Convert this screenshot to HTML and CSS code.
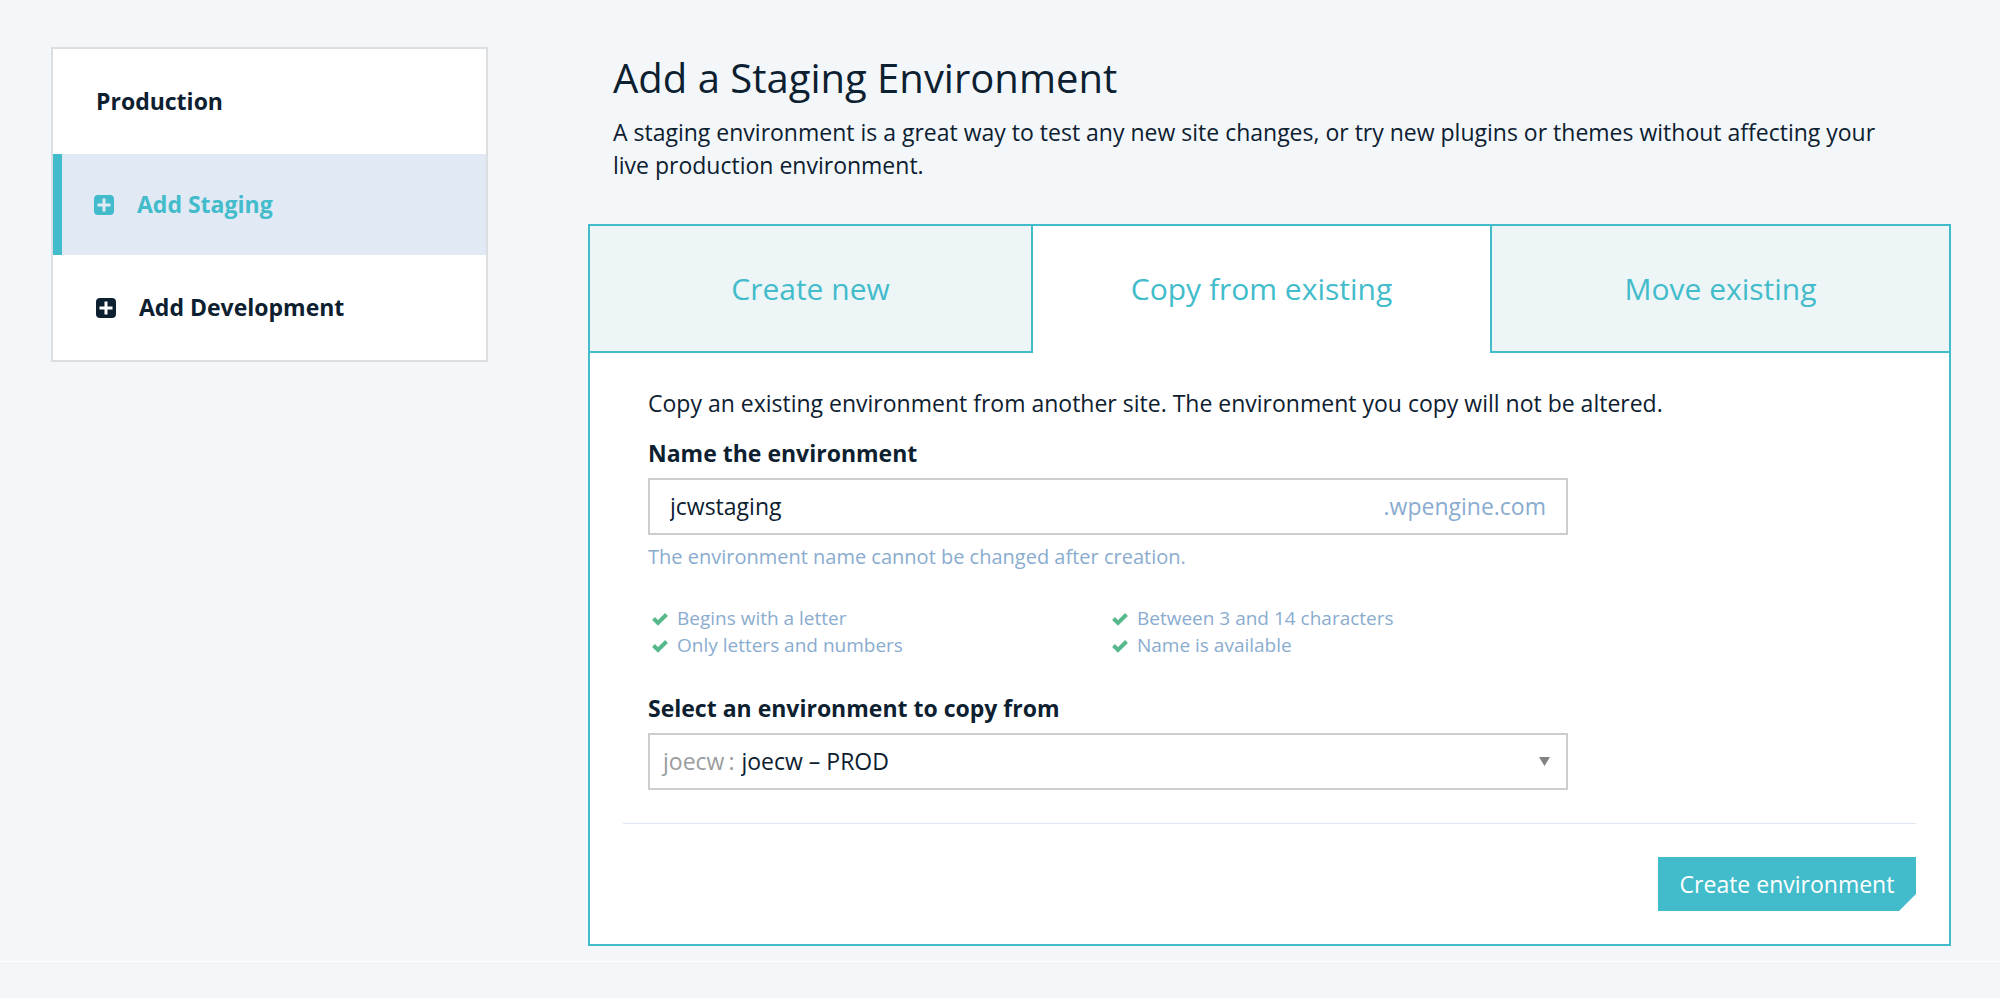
FILE: index.html
```html
<!DOCTYPE html>
<html lang="en">
<head>
<meta charset="utf-8">
<title>Add a Staging Environment</title>
<link rel="stylesheet" href="styles.css">
</head>
<body>
<div class="page">
  <nav class="sidebar" aria-label="Environments">
    <a class="env" href="#">Production</a>
    <a class="env env-active" href="#" aria-current="page">
      <svg class="plus" viewBox="0 0 20 20" aria-hidden="true"><path fill="currentColor" fill-rule="evenodd" d="M4 0h12a4 4 0 0 1 4 4v12a4 4 0 0 1-4 4H4a4 4 0 0 1-4-4V4a4 4 0 0 1 4-4zM8.500 3.500v5h-5v3h5v5h3v-5h5v-3h-5v-5z"/></svg>
      Add Staging
    </a>
    <a class="env" href="#">
      <svg class="plus" viewBox="0 0 20 20" aria-hidden="true"><path fill="currentColor" fill-rule="evenodd" d="M4 0h12a4 4 0 0 1 4 4v12a4 4 0 0 1-4 4H4a4 4 0 0 1-4-4V4a4 4 0 0 1 4-4zM8.500 3.500v5h-5v3h5v5h3v-5h5v-3h-5v-5z"/></svg>
      Add Development
    </a>
  </nav>
  <main class="main">
    <header class="intro">
      <h1 class="title">Add a Staging Environment</h1>
      <p class="lead">A staging environment is a great way to test any new site changes, or try new plugins or themes without affecting your live production environment.</p>
    </header>
    <section class="panel">
      <div class="tabs" role="tablist">
        <button class="tab" type="button" role="tab" aria-selected="false">Create new</button>
        <button class="tab tab-active" type="button" role="tab" aria-selected="true">Copy from existing</button>
        <button class="tab" type="button" role="tab" aria-selected="false">Move existing</button>
      </div>
      <form class="form">
        <p class="note">Copy an existing environment from another site. The environment you copy will not be altered.</p>
        <div class="fields">
          <label class="label" for="env-name">Name the environment</label>
          <div class="control">
            <input class="name-input" id="env-name" type="text" value="jcwstaging" spellcheck="false">
            <span class="suffix">.wpengine.com</span>
          </div>
          <p class="help">The environment name cannot be changed after creation.</p>
          <ul class="checks">
            <li class="check"><svg class="tick" viewBox="0 0 18 14" aria-hidden="true"><path d="M2.500 6.500l4.500 4.500 8.500-8.500"/></svg>Begins with a letter</li>
            <li class="check"><svg class="tick" viewBox="0 0 18 14" aria-hidden="true"><path d="M2.500 6.500l4.500 4.500 8.500-8.500"/></svg>Between 3 and 14 characters</li>
            <li class="check"><svg class="tick" viewBox="0 0 18 14" aria-hidden="true"><path d="M2.500 6.500l4.500 4.500 8.500-8.500"/></svg>Only letters and numbers</li>
            <li class="check"><svg class="tick" viewBox="0 0 18 14" aria-hidden="true"><path d="M2.500 6.500l4.500 4.500 8.500-8.500"/></svg>Name is available</li>
          </ul>
          <label class="label" for="env-source">Select an environment to copy from</label>
          <div class="control picker">
            <span class="account"><span>joecw</span><span>:</span></span>
            <select class="source" id="env-source"><option>joecw – PROD</option></select>
            <svg class="caret" viewBox="0 0 11 9" aria-hidden="true"><path fill="currentColor" d="M0 0h11L5.500 9z"/></svg>
          </div>
        </div>
        <div class="actions">
          <button class="submit" type="button">Create environment</button>
        </div>
      </form>
    </section>
  </main>
</div>
<hr class="page-rule">
</body>
</html>
```
FILE: styles.css
```css
* {
  box-sizing: border-box;
}

body {
  margin: 0;
  background: #f3f7fa;
  color: #0d2030;
  font: 23px/33px "Open Sans", "Noto Sans", sans-serif;
}

h1, p, ul {
  margin: 0;
  padding: 0;
}

button, input, select {
  font: inherit;
  color: inherit;
}

.page {
  display: grid;
  grid-template-columns: 437px 1fr;
  align-items: start;
  gap: 100px;
  padding: 47px 49px 15px 51px;
}

.sidebar {
  background: #fff;
  border: 2px solid #dcdfe1;
}

.env {
  display: flex;
  align-items: center;
  gap: 23px;
  height: 105px;
  padding-left: 43px;
  color: #0d2030;
  font-weight: 700;
  text-decoration: none;
}

.env-active {
  height: 101px;
  padding-left: 32px;
  border-left: 9px solid #42bccb;
  background: #e0e9f4;
  color: #42bccb;
}

.plus {
  width: 20px;
  height: 20px;
}

.intro {
  padding: 3px 55px 42px 25px;
}

.title {
  margin-bottom: 10px;
  font-size: 40px;
  font-weight: 400;
  line-height: 56px;
}

.panel {
  background: #fff;
  border: 2px solid #42bccb;
}

.tabs {
  display: grid;
  grid-template-columns: 443fr 457fr 459fr;
}

.tab {
  height: 127px;
  padding: 0;
  border: 0 solid #42bccb;
  border-bottom-width: 2px;
  background: #edf5f7;
  color: #42bccb;
  font-size: 30px;
}

.tab:first-child {
  border-right-width: 2px;
}

.tab:last-child {
  border-left-width: 2px;
}

.tab-active {
  border-bottom-color: #fff;
  background: #fff;
}

.form {
  padding: 34px 33px 33px;
}

.fields {
  max-width: 920px;
  margin: 0 25px 33px;
}

.note {
  margin: 0 25px 17px;
}

.label {
  display: block;
  margin-bottom: 8px;
  font-weight: 700;
}

.control {
  display: flex;
  align-items: center;
  height: 57px;
  border: 2px solid #cbcdce;
  background: #fff;
}

.name-input {
  flex: 1;
  min-width: 0;
  padding: 0 20px;
  border: 0;
  outline: 0;
  background: transparent;
}

.suffix {
  padding-right: 20px;
  color: #8aaccf;
}

.help {
  margin: 8px 0 34px;
  color: #8aaccf;
  font-size: 20px;
  line-height: 28px;
}

.checks {
  display: grid;
  grid-template-columns: 1fr 1fr;
  margin-bottom: 33px;
  color: #8aaccf;
  font-size: 19px;
  line-height: 27px;
  list-style: none;
}

.check {
  display: flex;
  align-items: center;
  gap: 8px;
  padding-left: 3px;
}

.tick {
  width: 18px;
  height: 14px;
  fill: none;
  stroke: #57b98b;
  stroke-width: 4;
}

.picker {
  display: grid;
  grid-template-columns: auto 1fr auto;
}

.account {
  display: flex;
  gap: 4px;
  grid-area: 1 / 1;
  padding-left: 13px;
  color: #9a9c9e;
}

.source {
  grid-area: 1 / 2;
  height: 53px;
  padding: 0 7px;
  border: 0;
  outline: 0;
  appearance: none;
  background: transparent;
}

.caret {
  grid-area: 1 / 3;
  width: 11px;
  height: 9px;
  margin-right: 16px;
  color: #808385;
}

.actions {
  display: flex;
  justify-content: flex-end;
  padding-top: 33px;
  border-top: 1px solid #dfe8f2;
}

.submit {
  min-width: 258px;
  height: 54px;
  padding: 0 20px;
  border: 0;
  background: #42bccb;
  color: #fff;
  clip-path: polygon(0 0, 100% 0, 100% calc(100% - 17px), calc(100% - 17px) 100%, 0 100%);
}

.page-rule {
  height: 1px;
  margin: 0;
  border: 0;
  background: #fff;
}
```
